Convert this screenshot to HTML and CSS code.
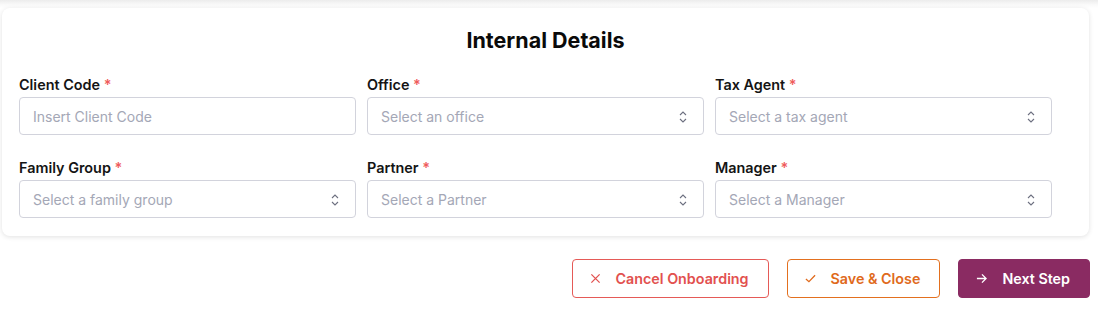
FILE: index.html
```html
<!DOCTYPE html>
<html lang="en">
<head>
  <meta charset="UTF-8" />
  <meta name="viewport" content="width=device-width,initial-scale=1" />
  <title>Onboarding - Internal Details</title>
  <link rel="stylesheet" href="styles.css">
</head>
<body>
  <div class="prev-shadow"></div>

  <!-- Internal details card -->
  <div class="card">
    <h2>Internal Details</h2>
    <div class="grid">
      <div class="field">
        <label>Client Code <span class="req">*</span></label>
        <input class="input" placeholder="Insert Client Code">
      </div>
      <div class="field">
        <label>Office <span class="req">*</span></label>
        <div class="select"><span>Select an office</span><svg class="chev" viewBox="0 0 8 14"><path d="M1 5 L4 2 L7 5 M1 9 L4 12 L7 9"/></svg></div>
      </div>
      <div class="field">
        <label>Tax Agent <span class="req">*</span></label>
        <div class="select"><span>Select a tax agent</span><svg class="chev" viewBox="0 0 8 14"><path d="M1 5 L4 2 L7 5 M1 9 L4 12 L7 9"/></svg></div>
      </div>
      <div class="field">
        <label>Family Group <span class="req">*</span></label>
        <div class="select"><span>Select a family group</span><svg class="chev" viewBox="0 0 8 14"><path d="M1 5 L4 2 L7 5 M1 9 L4 12 L7 9"/></svg></div>
      </div>
      <div class="field">
        <label>Partner <span class="req">*</span></label>
        <div class="select"><span>Select a Partner</span><svg class="chev" viewBox="0 0 8 14"><path d="M1 5 L4 2 L7 5 M1 9 L4 12 L7 9"/></svg></div>
      </div>
      <div class="field">
        <label>Manager <span class="req">*</span></label>
        <div class="select"><span>Select a Manager</span><svg class="chev" viewBox="0 0 8 14"><path d="M1 5 L4 2 L7 5 M1 9 L4 12 L7 9"/></svg></div>
      </div>
    </div>
  </div>

  <!-- Actions -->
  <div class="actions">
    <button class="btn btn-cancel">
      <svg class="ico" viewBox="0 0 12 12"><path d="M1.5 1.5 L10.5 10.5 M10.5 1.5 L1.5 10.5"/></svg>
      Cancel Onboarding
    </button>
    <button class="btn btn-save">
      <svg class="ico" viewBox="0 0 12 12"><path d="M1 6.5 L4.3 9.5 L11 2.5"/></svg>
      Save &amp; Close
    </button>
    <button class="btn btn-next">
      <svg class="ico" viewBox="0 0 12 12"><path d="M1 6 H11 M6.5 1.5 L11 6 L6.5 10.5"/></svg>
      Next Step
    </button>
  </div>
</body>
</html>
```

FILE: styles.css
```css
* { box-sizing: border-box; margin:0; padding:0 }
body {
  font-family: 'Segoe UI', Inter, sans-serif;
  background: #fff;
  color: #111;
  width: 1098px;
  height: 310px;
  overflow: hidden;
}

.prev-shadow {
  height: 8px;
  background: linear-gradient(#ececec, #fafafa 60%, #fff);
}

.card {
  margin: 0 9px 0 2px;
  background: #fff;
  border-radius: 8px;
  box-shadow: 0 1px 5px rgba(0,0,0,0.12);
  padding: 18px 17px;
}

.card h2 {
  font-size: 21.5px;
  line-height: 28px;
  font-weight: 700;
  text-align: center;
  color: #0a0a0a;
  margin-bottom: 21px;
}

.grid {
  display: grid;
  grid-template-columns: repeat(3, 337px);
  column-gap: 11px;
  row-gap: 23px;
}

.field label {
  display: block;
  font-size: 14.4px;
  line-height: 20px;
  font-weight: 600;
  color: #141414;
  margin-bottom: 2px;
}

.req { color: #ef5b5b; }

.input, .select {
  width: 100%;
  height: 38px;
  border: 1px solid #d2d3dc;
  border-radius: 4px;
  background: #fff;
  font-family: inherit;
  font-size: 14px;
  color: #a4a7b6;
  padding: 1px 13px 0;
  outline: none;
}

.input::placeholder { color: #a4a7b6; }

.select {
  display: flex;
  align-items: center;
  justify-content: space-between;
  padding-right: 16px;
}

.chev {
  width: 8px;
  height: 14px;
  fill: none;
  stroke: #6d7080;
  stroke-width: 1.1;
}

.actions {
  display: flex;
  justify-content: flex-end;
  gap: 18px;
  margin: 23px 8px 0 0;
}

.btn {
  display: flex;
  align-items: center;
  gap: 15px;
  height: 39px;
  padding: 0 19px 0 17px;
  border-radius: 4px;
  font-family: inherit;
  font-size: 14.3px;
  font-weight: 600;
  background: #fff;
  cursor: pointer;
}

.ico {
  width: 11px;
  height: 11px;
  fill: none;
  stroke: currentColor;
  stroke-width: 1.4;
}

.btn-cancel {
  border: 1px solid #e55a57;
  color: #e2514f;
}

.btn-save {
  border: 1px solid #e3701f;
  color: #e06a1c;
}

.btn-next {
  border: 1px solid #8a2b62;
  background: #8a2b62;
  color: #fff;
}
```
